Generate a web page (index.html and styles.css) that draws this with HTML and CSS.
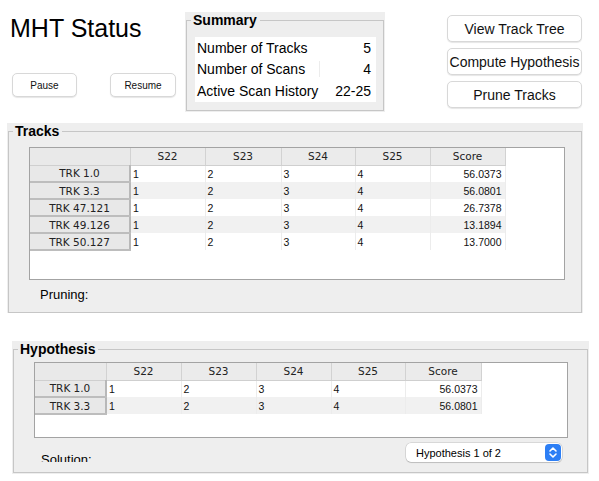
FILE: index.html
```html
<!DOCTYPE html>
<html>
<head>
<meta charset="utf-8">
<link rel="stylesheet" href="styles.css">
</head>
<body>
<div class="top">
  <div class="intro">
    <h1 class="title">MHT Status</h1>
    <div class="ctrl-row">
      <button class="btn small pause">Pause</button>
      <button class="btn small resume">Resume</button>
    </div>
  </div>
  <div class="panel summary-panel">
    <fieldset class="group summary-group">
      <legend>Summary</legend>
      <div class="summary">
        <div class="srow"><span>Number of Tracks</span><span>5</span></div>
        <div class="srow"><span>Number of Scans</span><span class="sval sep">4</span></div>
        <div class="srow"><span>Active Scan History</span><span>22-25</span></div>
      </div>
    </fieldset>
  </div>
  <div class="actions">
    <button class="btn big">View Track Tree</button>
    <button class="btn big">Compute Hypothesis</button>
    <button class="btn big">Prune Tracks</button>
  </div>
</div>

<div class="panel tracks-panel">
  <fieldset class="group tracks-group">
    <legend>Tracks</legend>
    <div class="grid-box tracks-box">
      <table class="grid tracks-grid">
        <colgroup><col class="c-rh"><col class="c75"><col class="c76"><col class="c74"><col class="c75"><col class="c75"></colgroup>
        <thead><tr><th class="corner"></th><th>S22</th><th>S23</th><th>S24</th><th>S25</th><th>Score</th></tr></thead>
        <tbody>
          <tr><th class="rh">TRK 1.0</th><td>1</td><td>2</td><td>3</td><td>4</td><td class="num">56.0373</td></tr>
          <tr><th class="rh">TRK 3.3</th><td>1</td><td>2</td><td>3</td><td>4</td><td class="num">56.0801</td></tr>
          <tr><th class="rh">TRK 47.121</th><td>1</td><td>2</td><td>3</td><td>4</td><td class="num">26.7378</td></tr>
          <tr><th class="rh">TRK 49.126</th><td>1</td><td>2</td><td>3</td><td>4</td><td class="num">13.1894</td></tr>
          <tr><th class="rh">TRK 50.127</th><td>1</td><td>2</td><td>3</td><td>4</td><td class="num">13.7000</td></tr>
        </tbody>
      </table>
    </div>
    <div class="pruning">Pruning:</div>
  </fieldset>
</div>

<div class="panel hyp-panel">
  <fieldset class="group hyp-group">
    <legend>Hypothesis</legend>
    <div class="grid-box hyp-box">
      <table class="grid hyp-grid">
        <colgroup><col class="c-rh2"><col class="c75"><col class="c75"><col class="c75"><col class="c74"><col class="c76"></colgroup>
        <thead><tr><th class="corner"></th><th>S22</th><th>S23</th><th>S24</th><th>S25</th><th>Score</th></tr></thead>
        <tbody>
          <tr><th class="rh">TRK 1.0</th><td>1</td><td>2</td><td>3</td><td>4</td><td class="num">56.0373</td></tr>
          <tr><th class="rh">TRK 3.3</th><td>1</td><td>2</td><td>3</td><td>4</td><td class="num">56.0801</td></tr>
        </tbody>
      </table>
    </div>
    <div class="solution-row">
      <div class="solution-clip"><span class="solution">Solution:</span></div>
      <div class="select">
        <span>Hypothesis 1 of 2</span>
        <svg class="stepper" width="16" height="17" viewBox="0 0 16 17">
          <rect x="0" y="0" width="16" height="17" rx="4" fill="#2d7ff5"/>
          <path d="M5 7 L8 4 L11 7" fill="none" stroke="#fff" stroke-width="1.6" stroke-linecap="round" stroke-linejoin="round"/>
          <path d="M5 10 L8 13 L11 10" fill="none" stroke="#fff" stroke-width="1.6" stroke-linecap="round" stroke-linejoin="round"/>
        </svg>
      </div>
    </div>
  </fieldset>
</div>
</body>
</html>
```
FILE: styles.css
```css
html, body {
  margin: 0;
  padding: 0;
  background: #ffffff;
  font-family: "Liberation Sans", Arial, sans-serif;
  color: #000;
}

.top {
  display: flex;
  align-items: flex-start;
  height: 112px;
}

.intro {
  width: 185px;
  flex: none;
}

.title {
  margin: 13px 0 0 10px;
  font-size: 25px;
  line-height: 30px;
  font-weight: normal;
}

.ctrl-row {
  display: flex;
  margin-top: 30px;
  padding-left: 12px;
}

.btn {
  font-family: "Liberation Sans", Arial, sans-serif;
  background: #ffffff;
  border: 1px solid #d8d8d8;
  border-radius: 5px;
  box-shadow: 0 1px 1px rgba(0, 0, 0, 0.10);
  color: #111;
  padding: 0;
  box-sizing: border-box;
}

.btn.small {
  height: 24px;
  font-size: 10px;
}

.pause { width: 65px; }
.resume { width: 66px; margin-left: 33px; }

.panel {
  background: #eeeeee;
  box-sizing: border-box;
}

.group {
  margin: 0;
  border: 1px solid #c6c6c6;
  box-sizing: border-box;
  min-inline-size: 0;
}

.group legend {
  font-weight: bold;
  font-size: 14px;
  line-height: 16px;
  padding: 0 3px 0 2px;
}

.summary-group legend { margin-left: -4px; }
.tracks-group legend,
.hyp-group legend { margin-left: -16px; }

.summary-panel {
  flex: none;
  margin-top: 12px;
  width: 200px;
  height: 100px;
  padding: 0 1px 1px 1px;
}

.summary-group {
  width: 198px;
  padding: 9px 0 0 8px;
  height: 99px;
}

.summary {
  width: 181px;
  height: 65px;
  background: #ffffff;
  font-size: 14px;
}

.srow {
  display: flex;
  justify-content: space-between;
  align-items: center;
  height: 21.6px;
  padding: 0 5px 0 2px;
}

.sval.sep {
  border-left: 1px solid #ececec;
  padding-left: 43px;
}

.actions {
  flex: none;
  margin-left: 62px;
  margin-top: 15px;
  display: flex;
  flex-direction: column;
  gap: 6px;
}

.btn.big {
  width: 135px;
  height: 27px;
  font-size: 14px;
}

.tracks-panel {
  margin: 11px 0 0 7px;
  width: 576px;
  padding: 0 1px 0 1px;
}

.tracks-group {
  width: 574px;
  padding: 8px 0 10px 20px;
}

.grid-box {
  background: #ffffff;
  border: 1px solid #a3a3a3;
  box-sizing: border-box;
  overflow: hidden;
}

.tracks-box {
  width: 536px;
  height: 133px;
}

.grid {
  border-collapse: collapse;
  table-layout: fixed;
  font-size: 11px;
}

.tracks-grid { width: 475px; }
.hyp-grid { width: 446px; }

col.c-rh { width: 100px; }
col.c-rh2 { width: 71px; }
col.c74 { width: 74px; }
col.c75 { width: 75px; }
col.c76 { width: 76px; }

.grid thead th {
  height: 17px;
  padding: 0;
  background: #ebebeb;
  font-family: "DejaVu Sans", sans-serif;
  font-weight: normal;
  font-size: 10.5px;
  color: #222;
  text-align: center;
  border-right: 1px solid #d2d2d2;
  border-bottom: 1px solid #cfcfcf;
  box-sizing: border-box;
}

.grid thead th.corner {
  background: #e9e9e9;
}

.grid tbody tr {
  height: 17px;
}

.grid tbody tr:nth-child(even) td {
  background: #f1f1f1;
}

.grid th.rh {
  padding: 0;
  background: #e8e8e8;
  font-family: "DejaVu Sans", sans-serif;
  font-weight: normal;
  font-size: 10.5px;
  color: #222;
  text-align: center;
  border-right: 2px solid #b8b8b8;
  border-bottom: 2px solid #bdbdbd;
}

.grid td {
  padding: 0 2px 0 2px;
  font-size: 10.5px;
  color: #111;
  border-right: 1px solid #ececec;
  white-space: nowrap;
}

.grid td.num {
  text-align: right;
  padding-right: 3px;
}

.pruning {
  margin-top: 7px;
  padding-left: 11px;
  font-size: 13px;
  line-height: 15px;
}

.hyp-panel {
  margin: 28px 0 0 12px;
  width: 577px;
  padding: 0 1px 1px 1px;
}

.hyp-group {
  width: 575px;
  padding: 5px 0 10px 20px;
}

.hyp-box {
  width: 534px;
  height: 76px;
}

.solution-row {
  display: flex;
  align-items: flex-start;
  justify-content: space-between;
  width: 534px;
  margin-top: 5px;
}

.solution-clip {
  height: 19px;
  overflow: hidden;
  padding-left: 7px;
  box-sizing: border-box;
}

.solution {
  display: block;
  padding-top: 9px;
  font-size: 13px;
  line-height: 15px;
}

.select {
  display: flex;
  align-items: center;
  justify-content: space-between;
  width: 156px;
  height: 19px;
  margin-right: 6px;
  box-sizing: border-box;
  padding: 0 1px 0 10px;
  background: #ffffff;
  border-radius: 5px;
  box-shadow: 0 0 0 0.5px rgba(0, 0, 0, 0.18), 0 1px 1px rgba(0, 0, 0, 0.12);
  font-size: 11px;
}

.stepper {
  display: block;
}
```
